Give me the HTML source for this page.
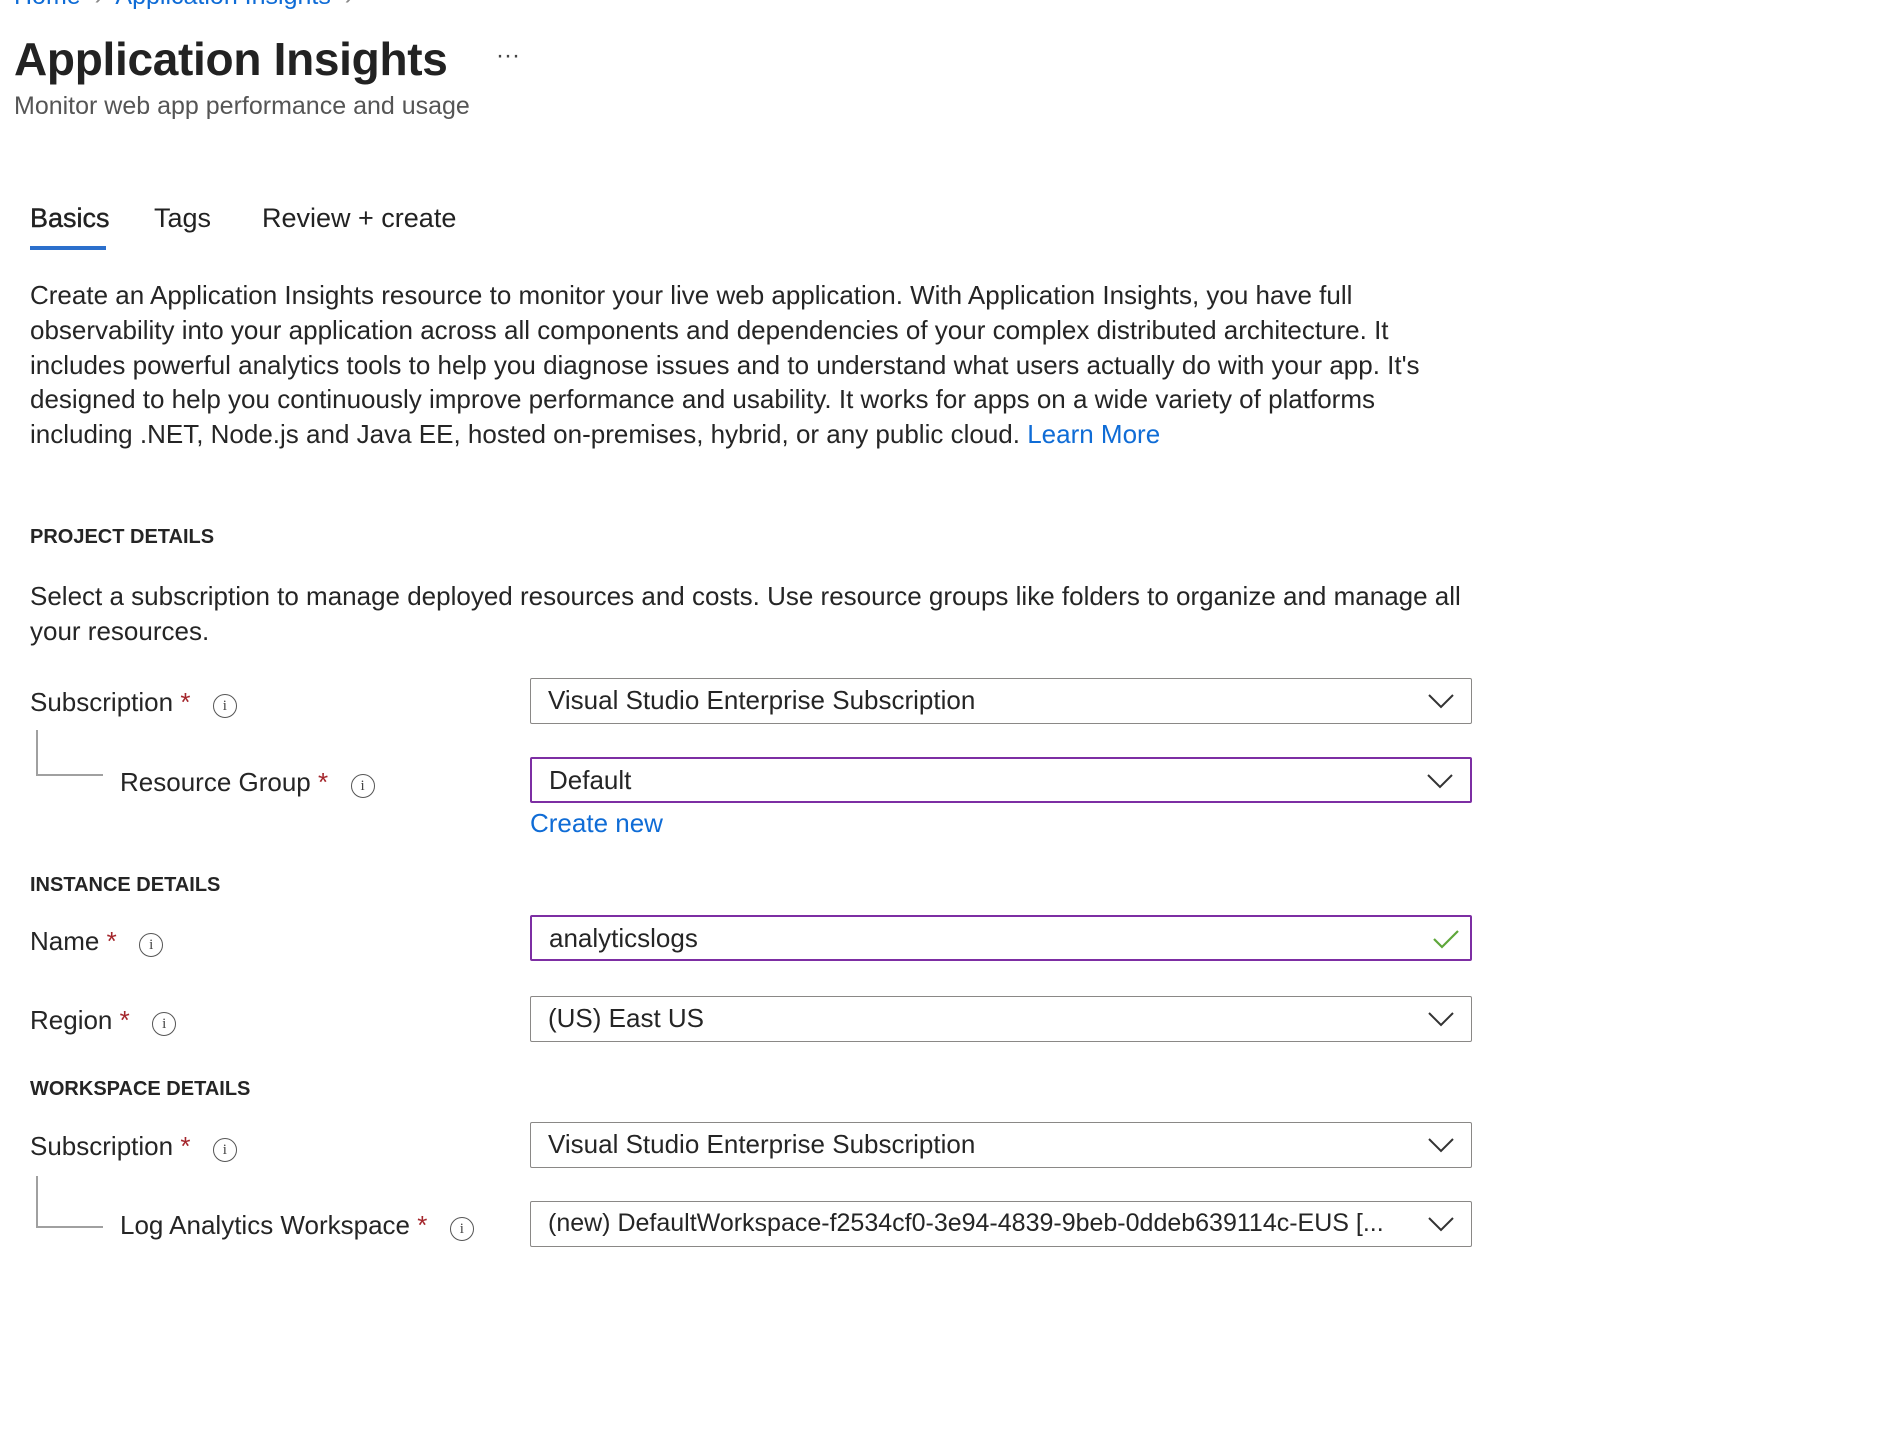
<!DOCTYPE html>
<html><head><meta charset="utf-8"><style>
*{margin:0;padding:0;box-sizing:border-box}
body{width:1884px;height:1436px;background:#fff;font-family:"Liberation Sans",sans-serif;color:#252525;position:relative;overflow:hidden}
.a{position:absolute;white-space:nowrap}
.t{font-size:26px;line-height:30px}
.h{font-size:20px;font-weight:bold;line-height:24px;color:#252525}
.box{position:absolute;left:530px;width:942px;height:46px;border:1.5px solid #8a8886;border-radius:2px;font-size:26px;line-height:43px;padding-left:17px}
.box.p{border:2px solid #7d2ea3}
.chev{position:absolute;right:16px;top:13px}
.req{color:#a4262c}
.info{display:inline-block;width:24px;height:24px;border:1.4px solid #555;border-radius:50%;font-size:15px;line-height:22px;text-align:center;color:#444;font-family:"Liberation Serif",serif;vertical-align:1px;margin-left:8px}
.tree{position:absolute;left:36px;width:67px;border-left:2px solid #a0a0a0;border-bottom:2px solid #a0a0a0}
.blue{color:#0f6cd6}
</style></head><body>
<div class="a blue" style="left:14px;top:-18px;font-size:25px">Home &nbsp;<span style="color:#888">›</span>&nbsp; Application Insights &nbsp;<span style="color:#888">›</span></div>
<div class="a" style="left:14px;top:32px;font-size:46px;font-weight:bold;letter-spacing:-0.3px;color:#222">Application Insights</div>
<div class="a" style="left:496px;top:42px;font-size:24px;color:#444">···</div>
<div class="a" style="left:14px;top:92px;font-size:25px;color:#555">Monitor web app performance and usage</div>
<div class="a" style="left:30px;top:203px;font-size:27px;color:#222;-webkit-text-stroke:0.4px #222">Basics</div>
<div class="a" style="left:154px;top:203px;font-size:27px;color:#222">Tags</div>
<div class="a" style="left:262px;top:203px;font-size:27px;color:#222">Review + create</div>
<div class="a" style="left:30px;top:246px;width:76px;height:4px;background:#2b6fcc"></div>
<div class="a t" style="left:30px;top:280px">Create an Application Insights resource to monitor your live web application. With Application Insights, you have full</div>
<div class="a t" style="left:30px;top:315px">observability into your application across all components and dependencies of your complex distributed architecture. It</div>
<div class="a t" style="left:30px;top:350px">includes powerful analytics tools to help you diagnose issues and to understand what users actually do with your app. It's</div>
<div class="a t" style="left:30px;top:384px">designed to help you continuously improve performance and usability. It works for apps on a wide variety of platforms</div>
<div class="a t" style="left:30px;top:419px">including .NET, Node.js and Java EE, hosted on-premises, hybrid, or any public cloud. <span class="blue">Learn More</span></div>
<div class="a h" style="left:30px;top:525px">PROJECT DETAILS</div>
<div class="a t" style="left:30px;top:581px">Select a subscription to manage deployed resources and costs. Use resource groups like folders to organize and manage all</div>
<div class="a t" style="left:30px;top:616px">your resources.</div>

<div class="a t" style="left:30px;top:687px">Subscription <span class="req">*</span> &nbsp;<span class="info">i</span></div>
<div class="box" style="top:678px">Visual Studio Enterprise Subscription<svg class="chev" width="28" height="18" viewBox="0 0 28 18"><path d="M2 3 L14 15 L26 3" fill="none" stroke="#333" stroke-width="2"/></svg></div>
<div class="tree" style="top:730px;height:46px"></div>
<div class="a t" style="left:120px;top:767px">Resource Group <span class="req">*</span> &nbsp;<span class="info">i</span></div>
<div class="box p" style="top:757px">Default<svg class="chev" width="28" height="18" viewBox="0 0 28 18"><path d="M2 3 L14 15 L26 3" fill="none" stroke="#333" stroke-width="2"/></svg></div>
<div class="a t blue" style="left:530px;top:808px">Create new</div>

<div class="a h" style="left:30px;top:873px">INSTANCE DETAILS</div>
<div class="a t" style="left:30px;top:926px">Name <span class="req">*</span> &nbsp;<span class="info">i</span></div>
<div class="box p" style="top:915px">analyticslogs<svg style="position:absolute;right:10px;top:12px" width="28" height="20" viewBox="0 0 28 20"><path d="M2 10 L10 18 L26 2" fill="none" stroke="#5ea73a" stroke-width="2.2"/></svg></div>
<div class="a t" style="left:30px;top:1005px">Region <span class="req">*</span> &nbsp;<span class="info">i</span></div>
<div class="box" style="top:996px">(US) East US<svg class="chev" width="28" height="18" viewBox="0 0 28 18"><path d="M2 3 L14 15 L26 3" fill="none" stroke="#333" stroke-width="2"/></svg></div>

<div class="a h" style="left:30px;top:1077px">WORKSPACE DETAILS</div>
<div class="a t" style="left:30px;top:1131px">Subscription <span class="req">*</span> &nbsp;<span class="info">i</span></div>
<div class="box" style="top:1122px">Visual Studio Enterprise Subscription<svg class="chev" width="28" height="18" viewBox="0 0 28 18"><path d="M2 3 L14 15 L26 3" fill="none" stroke="#333" stroke-width="2"/></svg></div>
<div class="tree" style="top:1176px;height:52px"></div>
<div class="a t" style="left:120px;top:1210px">Log Analytics Workspace <span class="req">*</span> &nbsp;<span class="info">i</span></div>
<div class="box" style="top:1201px;overflow:hidden;font-size:25px">(new) DefaultWorkspace-f2534cf0-3e94-4839-9beb-0ddeb639114c-EUS [...<svg class="chev" width="28" height="18" viewBox="0 0 28 18" style="background:#fff"><path d="M2 3 L14 15 L26 3" fill="none" stroke="#333" stroke-width="2"/></svg></div>
</body></html>
